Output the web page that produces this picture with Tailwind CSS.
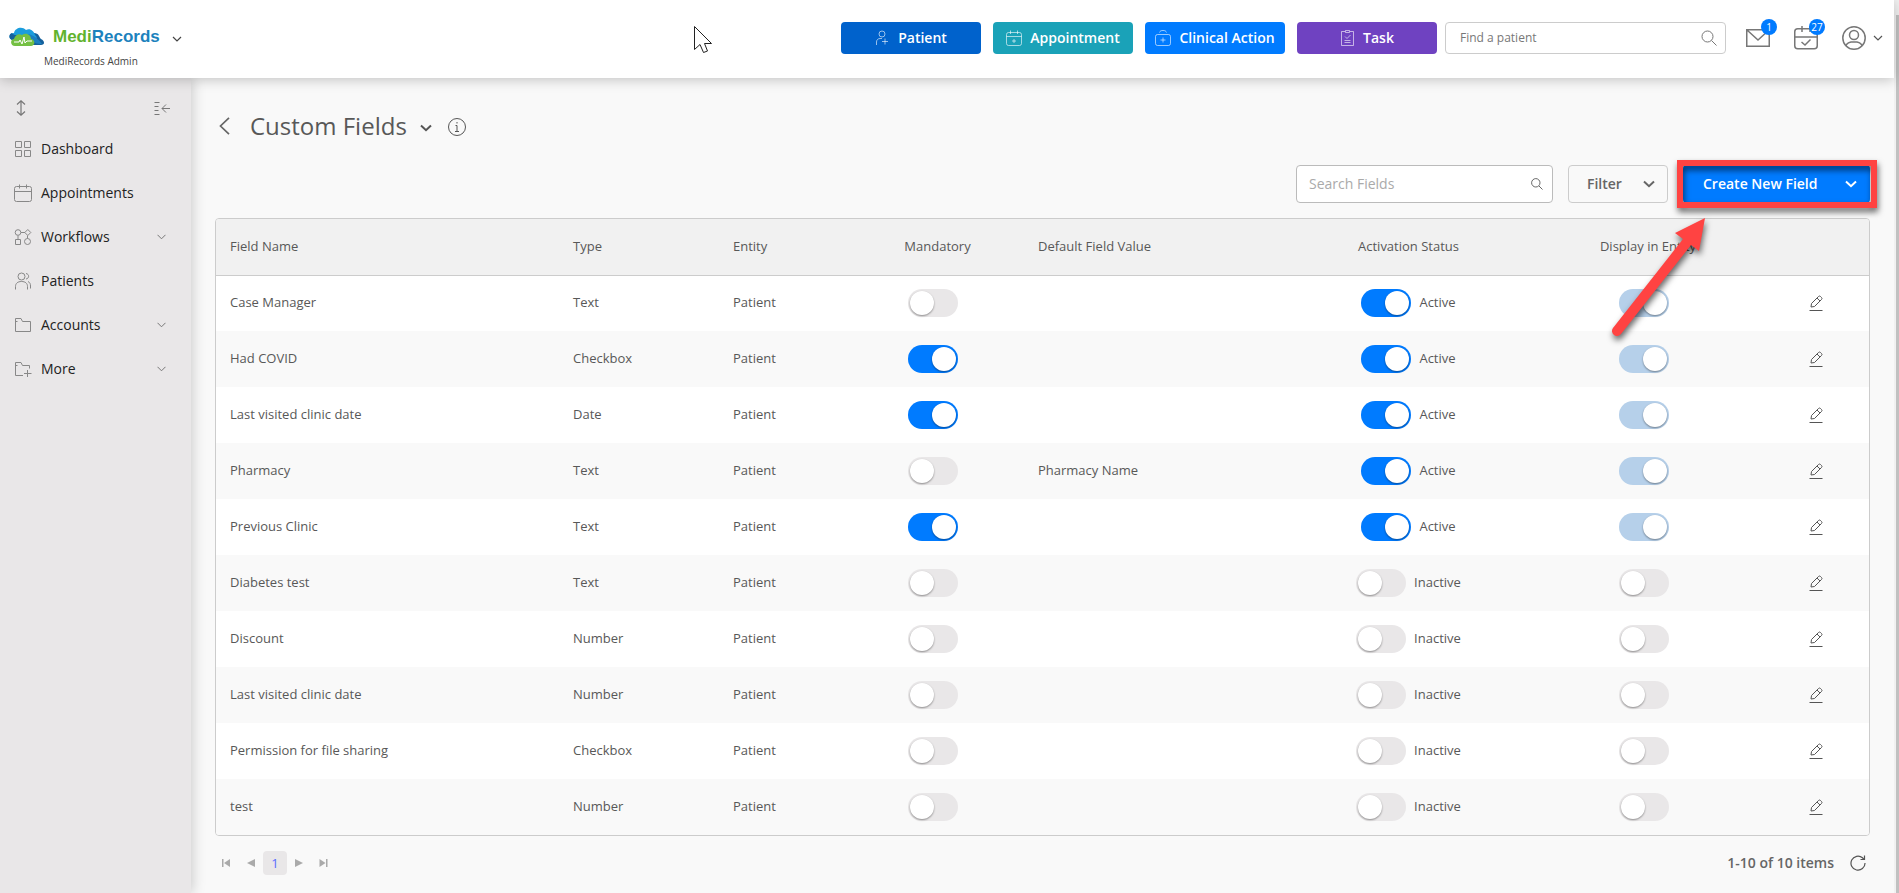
<!DOCTYPE html>
<html lang="en">

<head>
    <meta charset="UTF-8">
    <meta name="viewport" content="width=device-width, initial-scale=1.0">
    <title>Custom Fields - MediRecords</title>
    <script src="https://cdn.jsdelivr.net/npm/@tailwindcss/browser@4"></script>
</head>

<body class="flex min-h-screen bg-[#f9f9f9] font-['Open_Sans','Noto_Sans',sans-serif] text-[#585858]">

    <div class="flex flex-1 flex-col min-w-0">

        <!-- top bar -->
        <header class="relative z-20 flex items-center h-[78px] bg-white shadow-[0_2px_12px_rgba(0,0,0,0.22)] pr-[11px]">
            <div class="w-[191px] pl-[9px] pt-4">
                <button class="flex items-center">
                    <svg class="w-9 h-5 shrink-0" viewBox="0 0 36 20">
                        <path d="M22 18C17 12 20 5 25 6C30 6 30 10 32 12C36 14 36 18 32 18Z" fill="#14609c" />
                        <path d="M3 13C-1 11 0 6 5 6C6 1 13-1 17 3C21 1 25 4 26 8C29 10 28 14 24 14Z" fill="#1b9ddd" />
                        <path d="M3 13C-1 11 0 7 3 6C5 9 9 8 12 7C8 8 6 10 5 13Z" fill="#14609c" />
                        <path d="M19 7C24 8 30 12 33 17C28 17 24 16 22 12Z" fill="#1b7fc0" />
                        <path d="M6 19C1 19 1 12 5 12C6 8 10 6 13 8C17 5 22 8 22 12C27 13 26 19 22 19Z" fill="#74c043" />
                        <path d="M5 15H10L11 13L13 17L15 10L16 16L18 14H23" fill="none" stroke="#fff" stroke-width="1" />
                    </svg>
                    <span class="ml-2 font-['Liberation_Sans',Arial,sans-serif] font-bold text-[17px] leading-6 text-[#1c82bd]"><span class="text-[#62b32e]">Medi</span>Records</span>
                    <svg class="w-[10px] h-[6px] ml-3 mt-1" viewBox="0 0 10 6" fill="none" stroke="#444" stroke-width="1.2">
                        <path d="M1 1L5 5L9 1" />
                    </svg>
                </button>
                <div class="pl-[35px] mt-1 text-[10px] leading-4 font-medium text-[#444444]">MediRecords Admin</div>
            </div>

            <div class="ml-auto flex items-center pb-[2px]">
                <div class="flex gap-3">
                    <button class="flex items-center justify-center gap-[9px] w-[140px] h-8 rounded-[4px] bg-[#0062cc] text-white text-sm font-semibold">
                        <svg class="w-[14px] h-4" viewBox="0 0 14 16" fill="none" stroke="#fff" stroke-opacity=".6">
                            <circle cx="7" cy="4" r="3" />
                            <path d="M1.500 15V12C1.500 10 3 8.500 5 8.500H7M10 8.500V14.500M7 11.500H13" />
                        </svg>
                        Patient
                    </button>
                    <button class="flex items-center justify-center gap-2 w-[140px] h-8 rounded-[4px] bg-[#1aa2b8] text-white text-sm font-semibold">
                        <svg class="w-4 h-4" viewBox="0 0 16 16" fill="none" stroke="#fff" stroke-opacity=".6">
                            <rect x=".5" y="2.500" width="15" height="13" rx="2" />
                            <path d="M.5 6.500H15.500M4.500 .5V4M11.500 .5V4M8 9V13M6 11H10" />
                        </svg>
                        Appointment
                    </button>
                    <button class="flex items-center justify-center gap-2 w-[140px] h-8 rounded-[4px] bg-[#007bff] text-white text-sm font-semibold">
                        <svg class="w-4 h-4" viewBox="0 0 16 16" fill="none" stroke="#fff" stroke-opacity=".6">
                            <rect x=".5" y="4.500" width="15" height="11" rx="2" />
                            <path d="M4.500 2.500C5 1 6 .5 8 .5C10 .5 11 1 11.500 2.500M8 7.500V12.500M5.500 10H10.500" />
                        </svg>
                        Clinical Action
                    </button>
                    <button class="flex items-center justify-center gap-2 w-[140px] h-8 rounded-[4px] bg-[#6f42c1] text-white text-sm font-semibold">
                        <svg class="w-[15px] h-4" viewBox="0 0 15 16" fill="none" stroke="#fff" stroke-opacity=".6">
                            <path d="M5 1.500H1.500V15.500H13.500V1.500H10M5.500 .5H9.500V2.500H5.500ZM5 6.500L7 8.500L10.500 5M4.500 10.500H10.500M4.500 12.500H10.500" />
                        </svg>
                        Task
                    </button>
                </div>

                <div class="flex items-center ml-2 w-[281px] h-8 rounded-[4px] border border-[#cccccc] bg-white pl-[14px] pr-2">
                    <input type="text" aria-label="Find a patient" placeholder="Find a patient" class="flex-1 min-w-0 text-xs placeholder:text-[#777777] outline-none">
                    <svg class="w-4 h-4" viewBox="0 0 16 16" fill="none" stroke="#777">
                        <circle cx="6.500" cy="6.500" r="5.500" />
                        <path d="M10.500 10.500L15.500 15.500" />
                    </svg>
                </div>

                <div class="flex items-center gap-6 ml-5">
                    <button aria-label="Messages" class="relative">
                        <svg class="w-6 h-6" viewBox="0 0 24 24" fill="none" stroke="#777" stroke-width="1.500">
                            <path d="M.75 3.750H23.250V20.250H.75ZM1 4L12 14L23 4" />
                        </svg>
                        <span class="absolute -top-[7px] left-[15px] w-4 h-4 rounded-full bg-[#007bff] text-white text-[10px] leading-4 text-center">1</span>
                    </button>
                    <button aria-label="Calendar" class="relative">
                        <svg class="w-6 h-6" viewBox="0 0 24 24" fill="none" stroke="#777" stroke-width="1.500">
                            <rect x=".75" y="2.750" width="22.500" height="20" rx="3" />
                            <path d="M1 11H23M8 0V6M16 0V6M7.500 16L11 19L16.500 13.500" />
                        </svg>
                        <span class="absolute -top-[7px] left-[15px] w-4 h-4 rounded-full bg-[#007bff] text-white text-[10px] leading-4 text-center">27</span>
                    </button>
                    <button aria-label="Account" class="flex items-center gap-[7px]">
                        <svg class="w-6 h-6" viewBox="0 0 24 24" fill="none" stroke="#777" stroke-width="1.500">
                            <circle cx="12" cy="12" r="11.200" />
                            <circle cx="12" cy="9" r="4.500" />
                            <path d="M4 20C4.500 17 6.500 16.500 9 16H15C17.500 16.500 19.500 17 20 20" />
                        </svg>
                        <svg class="w-[10px] h-[6px]" viewBox="0 0 10 6" fill="none" stroke="#555" stroke-width="1.200">
                            <path d="M1 1L5 5L9 1" />
                        </svg>
                    </button>
                </div>
            </div>

            <!-- mouse pointer -->
            <svg class="absolute left-[694px] top-[26px] w-[19px] h-[28px]" viewBox="0 0 19 28" fill="#fff" stroke="#222" stroke-width="1">
                <path d="M.5 .5V23.500L6 18.500L9.500 26.500L13.500 25L10.500 17.500H17.500Z" />
            </svg>
        </header>

        <div class="flex flex-1">

            <!-- sidebar -->
            <aside class="relative z-10 w-[191px] shrink-0 bg-[#e9e7e8] pt-[19px] shadow-[2px_0_12px_rgba(0,0,0,0.18)]">
                <div class="flex items-center justify-between h-[22px] pl-4 pr-[21px]">
                    <button aria-label="Resize menu">
                        <svg class="w-[10px] h-4" viewBox="0 0 10 16" fill="none" stroke="#777" stroke-width="1.200">
                            <path d="M5 1V15M1 4.500L5 .8L9 4.500M1 11.500L5 15.200L9 11.500" />
                        </svg>
                    </button>
                    <button aria-label="Collapse menu">
                        <svg class="w-4 h-[14px]" viewBox="0 0 16 14" fill="none" stroke="#777">
                            <path d="M.5 1.500H5.500M.5 5.500H4.500M.5 9.500H4.500M.5 13.500H5.500M8 7.500H16M12 3.500L8 7.500L12 11.500" />
                        </svg>
                    </button>
                </div>
                <nav class="mt-2">
                    <ul class="text-sm font-medium text-[#222222]">
                        <li>
                            <a href="#" class="flex items-center h-11 pl-[14px] pr-[25px]">
                                <svg class="w-[18px] h-[18px] mr-[9px]" viewBox="0 0 18 18" fill="none" stroke="#888">
                                    <path d="M1.500 1.500H7.500V7.500H1.500ZM10.500 1.500H16.500V7.500H10.500ZM1.500 10.500H7.500V16.500H1.500ZM10.500 10.500H16.500V16.500H10.500Z" />
                                </svg>
                                Dashboard
                            </a>
                        </li>
                        <li>
                            <a href="#" class="flex items-center h-11 pl-[14px] pr-[25px]">
                                <svg class="w-[18px] h-[18px] mr-[9px]" viewBox="0 0 18 18" fill="none" stroke="#888">
                                    <path d="M2.500 2.500H15.500Q17.500 2.500 17.500 4.500V15.500Q17.500 17.500 15.500 17.500H2.500Q.5 17.500 .5 15.500V4.500Q.5 2.500 2.500 2.500ZM.5 7.500H17.500M5.500 .5V4.500M12.500 .5V4.500" />
                                </svg>
                                Appointments
                            </a>
                        </li>
                        <li>
                            <a href="#" class="flex items-center h-11 pl-[14px] pr-[25px]">
                                <svg class="w-[18px] h-[18px] mr-[9px]" viewBox="0 0 18 18" fill="none" stroke="#888">
                                    <circle cx="4" cy="4.500" r="2.800" />
                                    <path d="M7 4.500H11M13.800 1.500L16.800 4.500L13.800 7.500L10.800 4.500ZM4 7.500V11M13.500 7.500V10.500M1.500 11.500H6.500V16.500H1.500Z" />
                                    <circle cx="13.500" cy="13.500" r="3" />
                                </svg>
                                Workflows
                                <svg class="w-[9px] h-[6px] ml-auto" viewBox="0 0 9 6" fill="none" stroke="#777">
                                    <path d="M.5 .8L4.500 4.800L8.500 .8" />
                                </svg>
                            </a>
                        </li>
                        <li>
                            <a href="#" class="flex items-center h-11 pl-[14px] pr-[25px]">
                                <svg class="w-[18px] h-[18px] mr-[9px]" viewBox="0 0 18 18" fill="none" stroke="#888">
                                    <circle cx="7.500" cy="4.500" r="3.500" />
                                    <path d="M1.500 17.500V14.500C1.500 11.500 3.500 9.500 7.500 9.500C11.500 9.500 13.500 11.500 13.500 14.500V17.500M12 1.500C15.500 2 15.500 6.500 12 7M14 9.500C16 10.500 16.500 12 16.500 14V16.500" />
                                </svg>
                                Patients
                            </a>
                        </li>
                        <li>
                            <a href="#" class="flex items-center h-11 pl-[14px] pr-[25px]">
                                <svg class="w-[18px] h-[18px] mr-[9px]" viewBox="0 0 18 18" fill="none" stroke="#888">
                                    <path d="M1.500 15.500V2.500H7L8.500 5.500H16.500V15.500ZM1.500 5.500H3.500" />
                                </svg>
                                Accounts
                                <svg class="w-[9px] h-[6px] ml-auto" viewBox="0 0 9 6" fill="none" stroke="#777">
                                    <path d="M.5 .8L4.500 4.800L8.500 .8" />
                                </svg>
                            </a>
                        </li>
                        <li>
                            <a href="#" class="flex items-center h-11 pl-[14px] pr-[25px]">
                                <svg class="w-[18px] h-[18px] mr-[9px]" viewBox="0 0 18 18" fill="none" stroke="#888">
                                    <path d="M9 15.500H1.500V2.500H7L8.500 5.500H15.500V8.500M1.500 5.500H3.500M13.500 10V17M10 13.500H17.500" />
                                </svg>
                                More
                                <svg class="w-[9px] h-[6px] ml-auto" viewBox="0 0 9 6" fill="none" stroke="#777">
                                    <path d="M.5 .8L4.500 4.800L8.500 .8" />
                                </svg>
                            </a>
                        </li>
                    </ul>
                </nav>
            </aside>

            <!-- content -->
            <main class="flex-1 min-w-0 pl-6 pr-6 pt-8">
                <div class="flex items-center h-8 pl-1">
                    <button aria-label="Back">
                        <svg class="w-[11px] h-[18px]" viewBox="0 0 11 18" fill="none" stroke="#666" stroke-width="1.700">
                            <path d="M10 .8L1.500 9L10 17.200" />
                        </svg>
                    </button>
                    <h1 class="ml-5 text-2xl font-medium">Custom Fields</h1>
                    <button aria-label="Switch page" class="ml-[13px] mt-1">
                        <svg class="w-3 h-2" viewBox="0 0 12 8" fill="none" stroke="#555" stroke-width="2">
                            <path d="M1 1.500L6 6.200L11 1.500" />
                        </svg>
                    </button>
                    <button aria-label="Info" class="ml-4 mt-[2px]">
                        <svg class="w-[18px] h-[18px]" viewBox="0 0 18 18" fill="none" stroke="#555">
                            <circle cx="9" cy="9" r="8.500" />
                            <path d="M9 4V5.500M7.500 7.500H9V13.500M7 13.500H11" />
                        </svg>
                    </button>
                </div>

                <div class="flex justify-end mt-[23px]">
                    <div class="flex items-center w-[257px] h-[38px] rounded-[4px] border border-[#bbbbbb] bg-white pl-3 pr-[9px]">
                        <input type="text" aria-label="Search Fields" placeholder="Search Fields" class="flex-1 min-w-0 text-sm placeholder:text-[#aaaaaa] outline-none">
                        <svg class="w-3 h-3" viewBox="0 0 12 12" fill="none" stroke="#666">
                            <circle cx="4.800" cy="4.800" r="4.200" />
                            <path d="M8 8L11.500 11.500" />
                        </svg>
                    </div>
                    <button class="flex items-center justify-between ml-[15px] w-[100px] h-[38px] rounded-[4px] border border-[#cccccc] pl-[18px] pr-3 text-sm font-semibold text-[#666666]">
                        Filter
                        <svg class="w-3 h-2" viewBox="0 0 12 8" fill="none" stroke="#666" stroke-width="2">
                            <path d="M1 1.500L6 6.200L11 1.500" />
                        </svg>
                    </button>
                    <div class="relative ml-[15px] w-[187px]">
                        <button class="flex items-center justify-between w-full h-[38px] rounded-[4px] bg-[#007bff] pl-5 pr-[13px] text-sm font-semibold text-white">
                            Create New Field
                            <svg class="w-3 h-2" viewBox="0 0 12 8" fill="none" stroke="#fff" stroke-width="2">
                                <path d="M1 1.500L6 6.200L11 1.500" />
                            </svg>
                        </button>
                        <!-- callout: box and arrow pointing at the button -->
                        <svg class="absolute -left-[72px] -top-[11px] z-10 w-[272px] h-[192px] pointer-events-none drop-shadow-[1px_4px_3px_rgba(0,0,0,0.6)]" viewBox="0 0 272 192">
                            <rect x="69" y="9" width="194" height="42" fill="none" stroke="#ff4342" stroke-width="6" />
                            <path d="M94 64L88 97L80 91L10 180A5 5 0 0 1 2 174L72 85L64 79Z" fill="#ff4342" />
                        </svg>
                    </div>
                </div>

                <div class="mt-[15px] rounded-[4px] border border-[#cccccc] overflow-hidden">
                    <table class="w-full table-fixed text-[13px] leading-5 font-medium">
                        <colgroup>
                            <col class="w-[343px]">
                            <col class="w-[160px]">
                            <col class="w-[132px]">
                            <col class="w-[173px]">
                            <col class="w-[260px]">
                            <col class="w-[249px]">
                            <col class="w-[230px]">
                            <col class="w-[106px]">
                        </colgroup>
                        <thead>
                            <tr class="h-14 bg-[#f1f1f1] border-b border-[#cccccc] text-left">
                                <th class="pl-[14px] pb-[2px] font-medium">Field Name</th>
                                <th class="pl-[14px] pb-[2px] font-medium">Type</th>
                                <th class="pl-[14px] pb-[2px] font-medium">Entity</th>
                                <th class="pb-[2px] text-center font-medium">Mandatory</th>
                                <th class="pl-[14px] pb-[2px] font-medium">Default Field Value</th>
                                <th class="pb-[2px] text-center font-medium">Activation Status</th>
                                <th class="pb-[2px] text-center font-medium">Display in Entity</th>
                                <th aria-label="Edit"></th>
                            </tr>
                        </thead>
                        <tbody id="rows"></tbody>
                    </table>
                </div>

                <div class="flex items-center justify-between h-[54px] pl-[7px] pr-1">
                    <div class="flex items-center">
                        <button aria-label="First page" class="w-[9px] h-6">
                            <svg class="w-[9px] h-2" viewBox="0 0 9 8" fill="#aaa"><path d="M0 0H1.500V8H0ZM8 0V8L2 4Z" /></svg>
                        </button>
                        <button aria-label="Previous page" class="w-2 h-6 ml-4">
                            <svg class="w-2 h-2" viewBox="0 0 8 8" fill="#aaa"><path d="M8 0V8L0 4Z" /></svg>
                        </button>
                        <button class="w-6 h-6 ml-2 rounded-[4px] bg-[#e9e7e8] text-[13px] leading-6 text-[#5a6cff]">1</button>
                        <button aria-label="Next page" class="w-2 h-6 ml-2">
                            <svg class="w-2 h-2" viewBox="0 0 8 8" fill="#aaa"><path d="M0 0V8L8 4Z" /></svg>
                        </button>
                        <button aria-label="Last page" class="w-[9px] h-6 ml-4">
                            <svg class="w-[9px] h-2" viewBox="0 0 9 8" fill="#aaa"><path d="M7 0H8.500V8H7ZM.5 0V8L6.500 4Z" /></svg>
                        </button>
                    </div>
                    <div class="flex items-center gap-4 text-sm font-semibold text-[#666666]">
                        1-10 of 10 items
                        <button aria-label="Refresh">
                            <svg class="w-4 h-4" viewBox="0 0 16 16" fill="none" stroke="#555" stroke-width="1.200">
                                <path d="M15 8A7 7 0 1 1 12.500 2.800L14 4.500M14.500 .5V4.500H10.500" />
                            </svg>
                        </button>
                    </div>
                </div>
            </main>
        </div>
    </div>

    <!-- scroll strip -->
    <div class="w-[5px] shrink-0 bg-[#f1f1f1] pl-[2px] pt-[15px] flex">
        <div class="flex-1 bg-[#c1c1c1]"></div>
    </div>

    <script>
        // name, type, mandatory, default value, active
        const fields = [
            ['Case Manager', 'Text', false, '', true],
            ['Had COVID', 'Checkbox', true, '', true],
            ['Last visited clinic date', 'Date', true, '', true],
            ['Pharmacy', 'Text', false, 'Pharmacy Name', true],
            ['Previous Clinic', 'Text', true, '', true],
            ['Diabetes test', 'Text', false, '', false],
            ['Discount', 'Number', false, '', false],
            ['Last visited clinic date', 'Number', false, '', false],
            ['Permission for file sharing', 'Checkbox', false, '', false],
            ['test', 'Number', false, '', false]
        ];

        function toggle(on, label, disabled) {
            const color = disabled ? 'checked:bg-[#b6d0ea]' : 'checked:bg-[#007bff]';
            return `<input type="checkbox" role="switch" aria-label="${label}" ${on ? 'checked' : ''} ${disabled ? 'disabled' : ''}
                class="appearance-none flex items-center shrink-0 w-[50px] h-7 px-[2px] rounded-full bg-[#e9e7e8] ${color} checked:justify-end before:block before:w-6 before:h-6 before:rounded-full before:bg-white before:shadow-[0_1px_2px_rgba(0,0,0,0.4)]">`;
        }

        document.getElementById('rows').innerHTML = fields.map(([name, type, mandatory, value, active], i) => `
            <tr class="h-14 ${i % 2 ? 'bg-[#f9f9f9]' : 'bg-white'}">
                <td class="pl-[14px] pb-[2px]">${name}</td>
                <td class="pl-[14px] pb-[2px]">${type}</td>
                <td class="pl-[14px] pb-[2px]">Patient</td>
                <td><div class="flex justify-center pr-[10px]">${toggle(mandatory, 'Mandatory', false)}</div></td>
                <td class="pl-[14px] pb-[2px]">${value}</td>
                <td><label class="flex items-center justify-center gap-2">${toggle(active, 'Activation status', false)}<span class="pb-[2px]">${active ? 'Active' : 'Inactive'}</span></label></td>
                <td><div class="flex justify-center pr-2">${toggle(active, 'Display in entity', active)}</div></td>
                <td>
                    <button aria-label="Edit" class="block mx-auto">
                        <svg class="w-[14px] h-4" viewBox="0 0 14 16" fill="none" stroke="#555">
                            <path d="M2 12L2.500 8.500L9.500 1.500Q10.500 .5 11.500 1.500L12.500 2.500Q13.500 3.500 12.500 4.500L5.500 11.500ZM8 3L11 6M.5 15.500H13.500" />
                        </svg>
                    </button>
                </td>
            </tr>`).join('');
    </script>
</body>

</html>
